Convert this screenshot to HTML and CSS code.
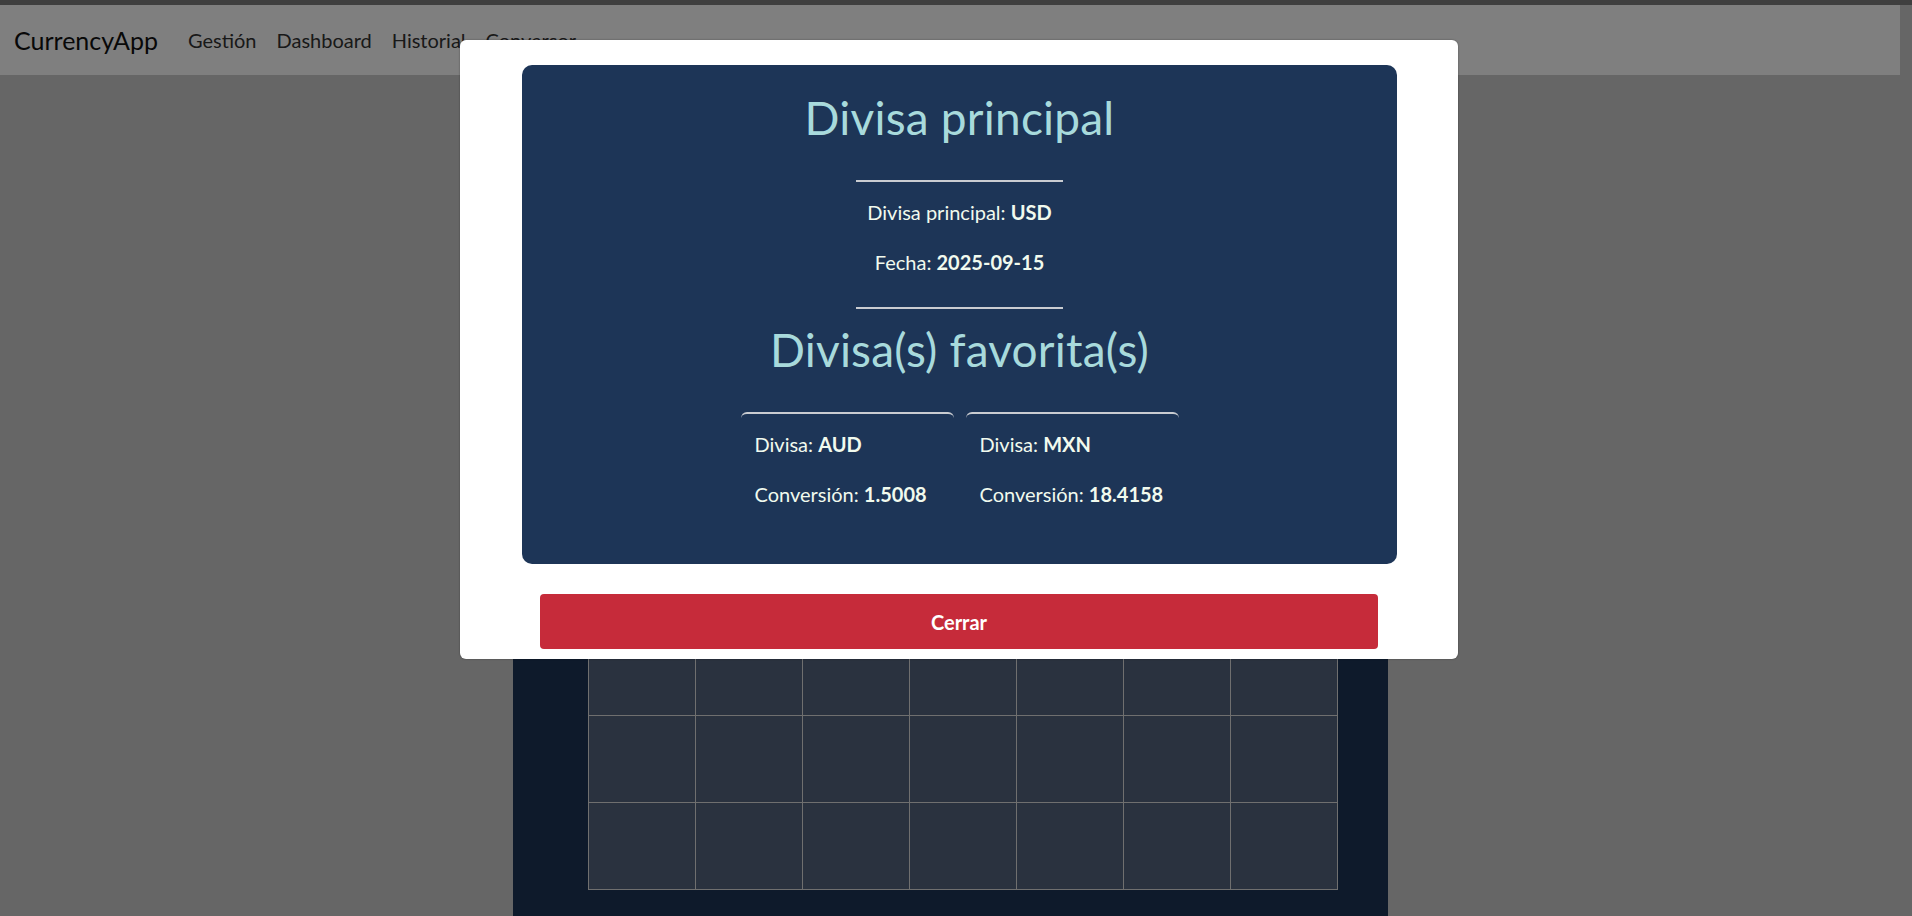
FILE: index.html
```html
<!DOCTYPE html>
<html lang="es">
<head>
<meta charset="utf-8">
<title>CurrencyApp</title>
<link rel="stylesheet" href="styles.css">
</head>
<body>
  <div class="top-strip"></div>
  <div class="page">
    <nav class="navbar">
      <a class="brand" href="#">CurrencyApp</a>
      <ul class="nav-links">
        <li><a href="#">Gestión</a></li>
        <li><a href="#">Dashboard</a></li>
        <li><a href="#">Historial</a></li>
        <li><a href="#">Conversor</a></li>
      </ul>
    </nav>
    <main class="main">
      <section class="calendar-card">
        <table class="calendar">
          <tbody>
            <tr><td></td><td></td><td></td><td></td><td></td><td></td><td></td></tr>
            <tr><td></td><td></td><td></td><td></td><td></td><td></td><td></td></tr>
            <tr><td></td><td></td><td></td><td></td><td></td><td></td><td></td></tr>
            <tr><td></td><td></td><td></td><td></td><td></td><td></td><td></td></tr>
            <tr><td></td><td></td><td></td><td></td><td></td><td></td><td></td></tr>
            <tr><td></td><td></td><td></td><td></td><td></td><td></td><td></td></tr>
          </tbody>
        </table>
      </section>
    </main>
  </div>

  <div class="backdrop"></div>

  <div class="modal">
    <div class="modal-dialog">
      <div class="modal-body">
        <div class="summary">
          <h2 class="summary-title">Divisa principal</h2>
          <hr class="rule rule-first">
          <p class="line line-first">Divisa principal: <strong>USD</strong></p>
          <p class="line">Fecha: <strong>2025-09-15</strong></p>
          <hr class="rule rule-second">
          <h2 class="summary-title">Divisa(s) favorita(s)</h2>
          <div class="favorites">
            <div class="fav-card">
              <p class="line">Divisa: <strong>AUD</strong></p>
              <p class="line">Conversión: <strong>1.5008</strong></p>
            </div>
            <div class="fav-card">
              <p class="line">Divisa: <strong>MXN</strong></p>
              <p class="line">Conversión: <strong>18.4158</strong></p>
            </div>
          </div>
        </div>
      </div>
      <div class="modal-footer">
        <button class="btn-close" type="button">Cerrar</button>
      </div>
    </div>
  </div>
</body>
</html>
```

FILE: styles.css
```css
* {
  box-sizing: border-box;
}

html, body {
  margin: 0;
  height: 916px;
  overflow: hidden;
}

body {
  background: #cccccc;
  font-family: "Lato", "Open Sans", sans-serif;
  font-size: 20px;
  position: relative;
}

.top-strip {
  height: 5px;
  background: #7e7e7e;
}

.page {
  padding-right: 12px;
}

/* Navbar */
.navbar {
  height: 70px;
  background: #ffffff;
  display: flex;
  align-items: center;
  padding-left: 14px;
}

.brand {
  font-size: 25px;
  color: #111;
  text-decoration: none;
  margin-right: 20px;
}

.nav-links {
  list-style: none;
  margin: 0;
  padding: 0;
  display: flex;
}

.nav-links a {
  display: block;
  padding: 0 10px;
  color: #333;
  text-decoration: none;
  font-size: 20px;
}

/* Underlying content */
.main {
  display: flex;
  justify-content: center;
  padding-top: 30px;
}

.calendar-card {
  width: 875px;
  background: #1d3557;
  padding: 262px 75px 60px;
}

.calendar {
  width: 750px;
  border-collapse: collapse;
  table-layout: fixed;
}

.calendar td {
  height: 87px;
  background: #55647f;
  border: 1px solid #dedede;
  padding: 0;
}

/* Backdrop & modal */
.backdrop {
  position: absolute;
  inset: 0;
  background: rgba(0, 0, 0, 0.5);
}

.modal {
  position: absolute;
  inset: 0;
}

.modal-dialog {
  margin: 40px 0 0 460px;
  width: 998px;
  background: #ffffff;
  border-radius: 6px;
  box-shadow: 0 0 2px rgba(0, 0, 0, 0.4);
}

.modal-body {
  padding: 25px 61px 0 62px;
}

.summary {
  background: #1d3557;
  border-radius: 10px;
  color: #f1faee;
  display: flex;
  flex-direction: column;
  align-items: center;
  padding: 26px 0 35px;
}

.summary-title {
  margin: 0;
  font-size: 46px;
  line-height: 53px;
  font-weight: 400;
  color: #a8dadc;
  letter-spacing: 0.2px;
}

.rule {
  width: 207px;
  height: 0;
  border: 0;
  border-top: 2px solid #c9ccd1;
  margin: 0;
}

.rule-first {
  margin-top: 36px;
}

.rule-second {
  margin-top: 30px;
  margin-bottom: 14px;
}

.line {
  margin: 0;
  line-height: 30px;
  font-size: 20px;
}

.line + .line {
  margin-top: 20px;
}

.line-first {
  margin-top: 15px;
}

.line strong {
  font-weight: 700;
}

.favorites {
  margin-top: 36px;
  display: flex;
  gap: 12px;
}

.fav-card {
  width: 213px;
  border-top: 2px solid #c9ccd1;
  border-radius: 6px;
  padding: 15px 14px 20px;
  text-align: left;
}

.modal-footer {
  padding: 30px 80px 10px;
}

.btn-close {
  display: block;
  width: 100%;
  height: 55px;
  border: 0;
  border-radius: 4px;
  background: #c62b3a;
  color: #ffffff;
  font-family: "Lato", "Open Sans", sans-serif;
  font-size: 20px;
  font-weight: 700;
}
```
